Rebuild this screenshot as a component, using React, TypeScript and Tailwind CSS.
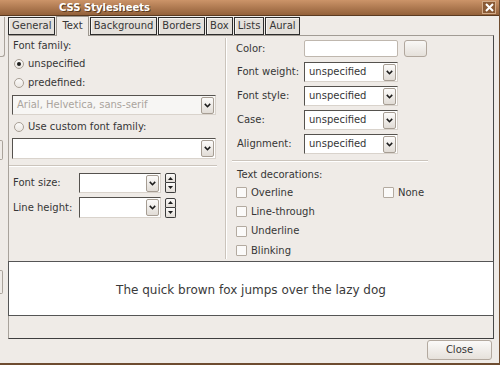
import React from "react";

const Chevron = () => (
  <svg width="7" height="5" viewBox="0 0 7 5">
    <path d="M0.8 0.9 L3.5 3.7 L6.2 0.9" fill="none" stroke="#1c1c1c" strokeWidth="1.6" />
  </svg>
);

function Combo({ className, text, disabled }: { className: string; text?: string; disabled?: boolean }) {
  return (
    <div
      className={
        "flex items-center border border-t-[#55524e] border-l-[#55524e] border-r-[#d9d3cc] border-b-[#d9d3cc] " +
        (disabled ? "bg-[#f7f6f4] " : "bg-white ") +
        className
      }
    >
      <div className={"flex-1 pl-[4px] truncate " + (disabled ? "text-[#aaa49d]" : "text-[#363636]")}>{text}</div>
      <div className="w-[13px] h-[17px] mr-[1px] rounded-[2px] border border-[#a69d93] bg-gradient-to-b from-[#fcfbfa] to-[#e1dcd6] flex items-center justify-center">
        <Chevron />
      </div>
    </div>
  );
}

const Radio = ({ checked }: { checked?: boolean }) => (
  <div className="w-[10px] h-[10px] rounded-full border border-[#a89f95] bg-gradient-to-b from-[#fbfaf9] to-[#ebe7e2] flex items-center justify-center">
    {checked && <div className="w-[4px] h-[4px] rounded-full bg-[#1e1e1e]" />}
  </div>
);

const Check = () => <div className="w-[11px] h-[11px] rounded-[1px] border border-[#b3aaa0] bg-[#fbfaf9]" />;

const Spinner = () => (
  <div className="flex flex-col w-[11px] h-[20px] ml-[4px]">
    <div className="h-[10px] rounded-t-[2px] border border-[#3d3d3d] bg-gradient-to-b from-[#fbfaf9] to-[#e3ded8] flex items-center justify-center">
      <svg width="5" height="3" viewBox="0 0 5 3"><path d="M0 3 L2.5 0 L5 3 Z" fill="#1c1c1c" /></svg>
    </div>
    <div className="h-[10px] rounded-b-[2px] border border-t-0 border-[#3d3d3d] bg-gradient-to-b from-[#fbfaf9] to-[#e3ded8] flex items-center justify-center">
      <svg width="5" height="3" viewBox="0 0 5 3"><path d="M0 0 L2.5 3 L5 0 Z" fill="#1c1c1c" /></svg>
    </div>
  </div>
);

const Sep = ({ className }: { className: string }) => (
  <div className={"flex flex-col " + className}>
    <div className="h-[1px] bg-[#cbc4bc]" />
    <div className="h-[1px] bg-white" />
  </div>
);

const Tab = ({ label, active }: { label: string; active?: boolean }) =>
  active ? (
    <div className="relative z-10 h-[20px] -mb-[1px] px-[5px] border border-b-0 border-[#9d978f] bg-[#efebe7] flex items-center pb-[2px]">
      {label}
    </div>
  ) : (
    <div className="h-[18px] px-[3px] border border-[#2c2c2c] bg-[#e4e0db] flex items-center shadow-[inset_1px_1px_0_#f8f6f3]">
      {label}
    </div>
  );

export default function App() {
  return (
    <div className="w-[500px] h-[365px] flex flex-col bg-[#efebe7] border-r border-b-2 border-[#6e4c30] text-[10px] leading-none text-[#363636] font-['DejaVu_Sans',sans-serif] overflow-hidden">
      {/* Title bar */}
      <div className="h-[16px] shrink-0 flex items-center bg-gradient-to-b from-[#cc9469] to-[#93613a] border-b border-[#5a3a20]">
        <div className="pl-[59px] flex-1 text-white font-bold text-[10px] [text-shadow:1px_1px_0_#5a3a20]">CSS Stylesheets</div>
        <div className="w-[14px] h-[13px] mr-[3px] border border-[#d2ab88] bg-[#8a5a35] flex items-center justify-center">
          <svg width="9" height="9" viewBox="0 0 9 9">
            <path d="M1 1 L8 8 M8 1 L1 8" stroke="white" strokeWidth="2" />
          </svg>
        </div>
      </div>

      <div className="flex flex-1">
        {/* left strip */}
        <div className="w-[8px] flex flex-col">
          <div className="w-[5px] h-[40px] mt-[1px] border-r border-b border-[#aaa39b] rounded-br-[3px]" />
          <div className="w-[3px] h-[20px] mt-[83px] border-r border-y border-[#aaa39b] rounded-r-[2px]" />
          <div className="w-[3px] h-[24px] mt-[110px] border-r border-y border-[#aaa39b] rounded-r-[2px]" />
        </div>

        {/* main */}
        <div className="w-[486px] flex flex-col">
          {/* tabs */}
          <div className="h-[19px] flex items-end gap-[1px]">
            <Tab label="General" />
            <Tab label="Text" active />
            <Tab label="Background" />
            <Tab label="Borders" />
            <Tab label="Box" />
            <Tab label="Lists" />
            <Tab label="Aural" />
          </div>

          {/* notebook */}
          <div className="h-[304px] flex flex-col border border-t-[#a19b94] border-l-[#a8a29b] border-r-[#474747] border-b-[#3e3e3e]">
            <div className="h-[225px] flex">
              {/* left column */}
              <div className="w-[216px] flex flex-col pt-[2px]">
                <div className="h-[16px] pl-[4px] flex items-center">Font family:</div>
                <div className="h-[19px] pl-[5px] flex items-center gap-[4px]">
                  <Radio checked />
                  <span>unspecified</span>
                </div>
                <div className="h-[20px] pl-[5px] flex items-center gap-[4px]">
                  <Radio />
                  <span>predefined:</span>
                </div>
                <Combo className="mt-[2px] ml-[3px] w-[204px] h-[20px]" text="Arial, Helvetica, sans-serif" disabled />
                <div className="h-[23px] pl-[5px] flex items-center gap-[4px]">
                  <Radio />
                  <span>Use custom font family:</span>
                </div>
                <Combo className="ml-[3px] w-[204px] h-[21px]" />
                <Sep className="mt-[6px] w-[208px]" />
                <div className="mt-[6px] h-[20px] flex items-center">
                  <div className="w-[70px] pl-[4px]">Font size:</div>
                  <Combo className="w-[82px] h-[20px]" />
                  <Spinner />
                </div>
                <div className="mt-[4px] h-[21px] flex items-center">
                  <div className="w-[70px] pl-[4px]">Line height:</div>
                  <Combo className="w-[82px] h-[21px]" />
                  <Spinner />
                </div>
              </div>

              {/* vertical separator */}
              <div className="w-[2px] flex my-[2px]">
                <div className="w-[1px] bg-[#cbc4bc]" />
                <div className="w-[1px] bg-white" />
              </div>

              {/* right column */}
              <div className="flex-1 flex flex-col">
                <div className="mt-[4px] h-[17px] flex items-center">
                  <div className="w-[77px] pl-[9px]">Color:</div>
                  <div className="w-[94px] h-[17px] bg-white border border-[#bfb7ae] rounded-[2px]" />
                  <div className="ml-[6px] w-[23px] h-[17px] rounded-[3px] border border-[#b1a79d] bg-gradient-to-b from-[#f9f8f6] to-[#e5e0da]" />
                </div>
                {["Font weight:", "Font style:", "Case:", "Alignment:"].map((l, i) => (
                  <div key={l} className={(i === 0 ? "mt-[5px] " : "mt-[4px] ") + "h-[20px] flex items-center"}>
                    <div className="w-[77px] pl-[10px]">{l}</div>
                    <Combo className="w-[94px] h-[20px]" text="unspecified" />
                  </div>
                ))}
                <Sep className="mt-[6px] ml-[5px] w-[196px]" />
                <div className="mt-[5px] h-[16px] pl-[10px] flex items-center">Text decorations:</div>
                <div className="h-[19px] pl-[9px] flex items-center">
                  <div className="w-[147px] flex items-center gap-[4px]">
                    <Check />
                    <span>Overline</span>
                  </div>
                  <div className="flex items-center gap-[4px]">
                    <Check />
                    <span>None</span>
                  </div>
                </div>
                <div className="h-[19px] pl-[9px] flex items-center gap-[4px]">
                  <Check />
                  <span>Line-through</span>
                </div>
                <div className="h-[20px] pl-[9px] flex items-center gap-[4px]">
                  <Check />
                  <span>Underline</span>
                </div>
                <div className="h-[19px] pl-[9px] flex items-center gap-[4px]">
                  <Check />
                  <span>Blinking</span>
                </div>
              </div>
            </div>

            {/* preview */}
            <div className="-mx-[1px] h-[55px] bg-white border border-[#555555] flex items-center justify-center pt-[2px] text-[12px] text-[#3a3a3a]">
              The quick brown fox jumps over the lazy dog
            </div>
          </div>

          {/* footer */}
          <div className="flex-1 flex justify-end items-start pt-[1px] pr-[2px]">
            <div className="w-[65px] h-[20px] rounded-[3px] border border-[#b3a99f] bg-gradient-to-b from-[#fbfaf9] to-[#e6e1db] flex items-center justify-center">
              Close
            </div>
          </div>
        </div>

        <div className="flex-1" />
      </div>
    </div>
  );
}
